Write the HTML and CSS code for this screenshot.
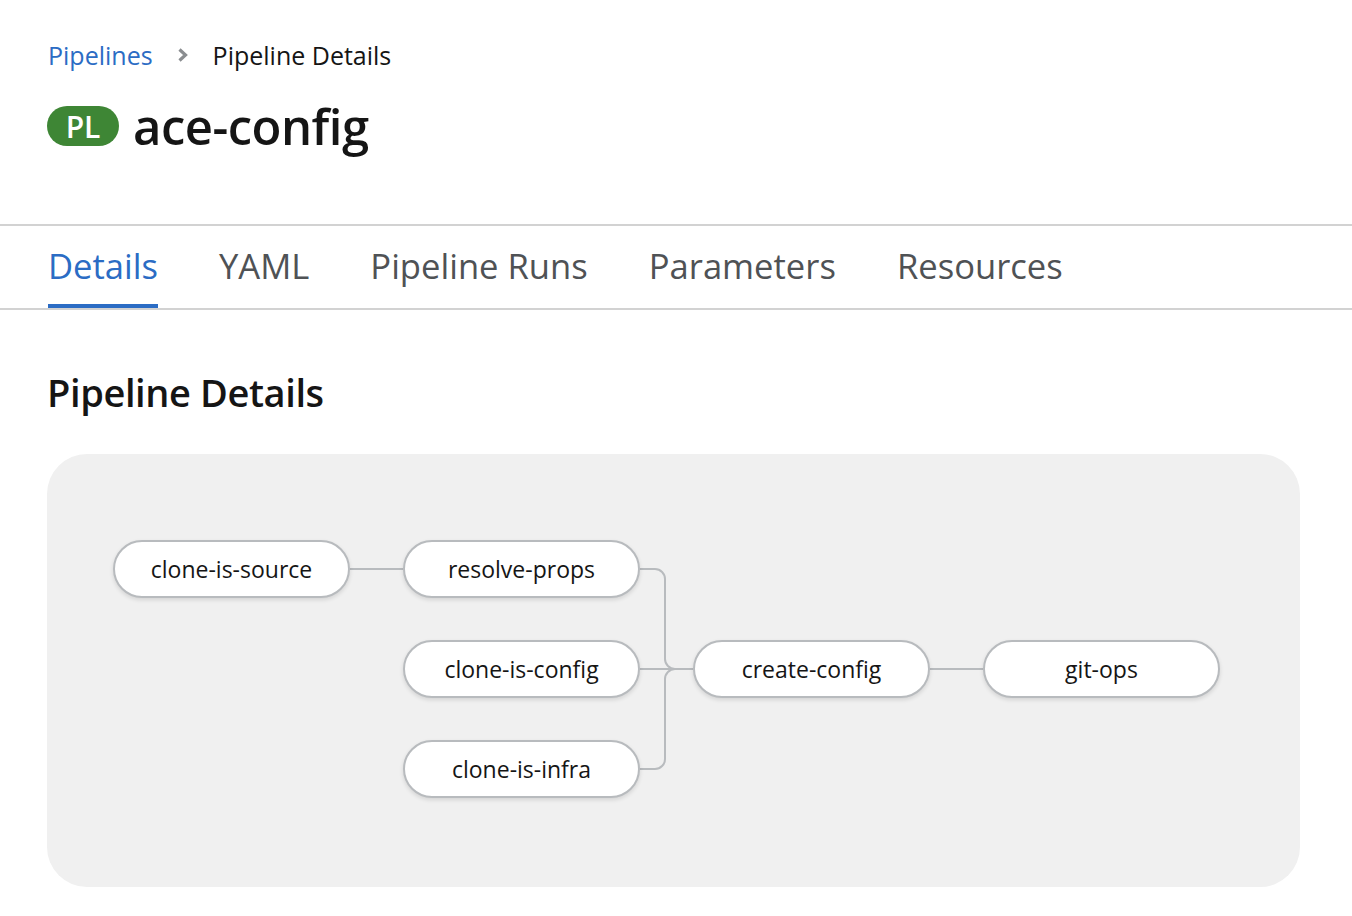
FILE: index.html
```html
<!DOCTYPE html>
<html>
<head>
<meta charset="utf-8">
<link rel="stylesheet" href="styles.css">
</head>
<body>
<div class="page">
  <header class="head">
    <nav class="crumbs">
      <a class="crumb-link">Pipelines</a>
      <svg class="chev" width="12" height="16" viewBox="0 0 12 16"><path d="M2.5 2.5 L8.5 8 L2.5 13.5" fill="none" stroke="#8a8d90" stroke-width="3.2" stroke-linejoin="miter"/></svg>
      <span class="crumb-cur">Pipeline Details</span>
    </nav>
    <div class="title-row">
      <span class="badge">PL</span>
      <h1 class="title">ace-config</h1>
    </div>
  </header>
  <div class="tabs">
    <div class="tab active">Details</div>
    <div class="tab">YAML</div>
    <div class="tab">Pipeline Runs</div>
    <div class="tab">Parameters</div>
    <div class="tab">Resources</div>
  </div>
  <section class="content">
    <h2 class="section-title">Pipeline Details</h2>
    <div class="graph">
      <svg class="edges" width="1253" height="433" viewBox="0 0 1253 433">
        <g fill="none" stroke="#b8bbbe" stroke-width="2">
          <path d="M303 115 H356"/>
          <path d="M593 115 H608 a10 10 0 0 1 10 10 V205 a10 10 0 0 0 10 10 H646"/>
          <path d="M593 215 H646"/>
          <path d="M593 315 H608 a10 10 0 0 0 10 -10 V225 a10 10 0 0 1 10 -10"/>
          <path d="M883 215 H936"/>
        </g>
      </svg>
      <div class="node" style="left:66px;top:86px">clone-is-source</div>
      <div class="node" style="left:356px;top:86px">resolve-props</div>
      <div class="node" style="left:356px;top:186px">clone-is-config</div>
      <div class="node" style="left:356px;top:286px">clone-is-infra</div>
      <div class="node" style="left:646px;top:186px">create-config</div>
      <div class="node" style="left:936px;top:186px">git-ops</div>
    </div>
  </section>
</div>
</body>
</html>
```
FILE: styles.css
```css
* { box-sizing: border-box; }
html, body { margin: 0; padding: 0; background: #fff; }
body {
  font-family: "Open Sans", "Noto Sans", sans-serif;
  color: #151515;
}
.page { width: 1352px; }
.head { padding: 34px 48px 0 48px; height: 224px; }
.crumbs {
  display: flex;
  align-items: center;
  height: 42px;
  font-size: 25px;
}
.crumb-link { color: #2b6cc4; }
.chev { margin: 0 24px 0 24px; }
.crumb-cur { color: #151515; }
.title-row {
  display: flex;
  align-items: center;
  margin-top: 20px;
  margin-left: -1px;
}
.badge {
  display: inline-flex;
  align-items: center;
  justify-content: center;
  width: 72px;
  height: 40px;
  border-radius: 20px;
  background: #3e8635;
  color: #fff;
  font-size: 30px;
  font-weight: 600;
  margin-right: 14px;
}
.title {
  margin: 0;
  font-size: 49px;
  font-weight: 600;
  line-height: 60px;
  letter-spacing: -0.5px;
  color: #151515;
}
.tabs {
  display: flex;
  border-top: 2px solid #d2d2d2;
  border-bottom: 2px solid #d2d2d2;
  height: 86px;
  padding-left: 48px;
  gap: 61px;
}
.tab {
  display: flex;
  align-items: center;
  font-size: 34.6px;
  color: #4f5255;
  height: 82px;
  padding-top: 0;
  border-bottom: 4px solid transparent;
}
.tab.active { color: #2b6cc4; border-bottom-color: #2b6cc4; }
.content { padding: 0 52px 0 47px; }
.section-title {
  margin: 0;
  padding-top: 60px;
  height: 144px;
  font-size: 38px;
  font-weight: 600;
  line-height: 44px;
  letter-spacing: -0.4px;
}
.graph {
  position: relative;
  width: 1253px;
  height: 433px;
  background: #f0f0f0;
  border-radius: 40px;
}
.edges { position: absolute; left: 0; top: 0; }
.node {
  position: absolute;
  width: 237px;
  height: 58px;
  border: 2px solid #b8bbbe;
  border-radius: 29px;
  background: #fff;
  box-shadow: 0 2px 4px rgba(0,0,0,0.12);
  display: flex;
  align-items: center;
  justify-content: center;
  font-size: 23px;
  color: #151515;
}
```
